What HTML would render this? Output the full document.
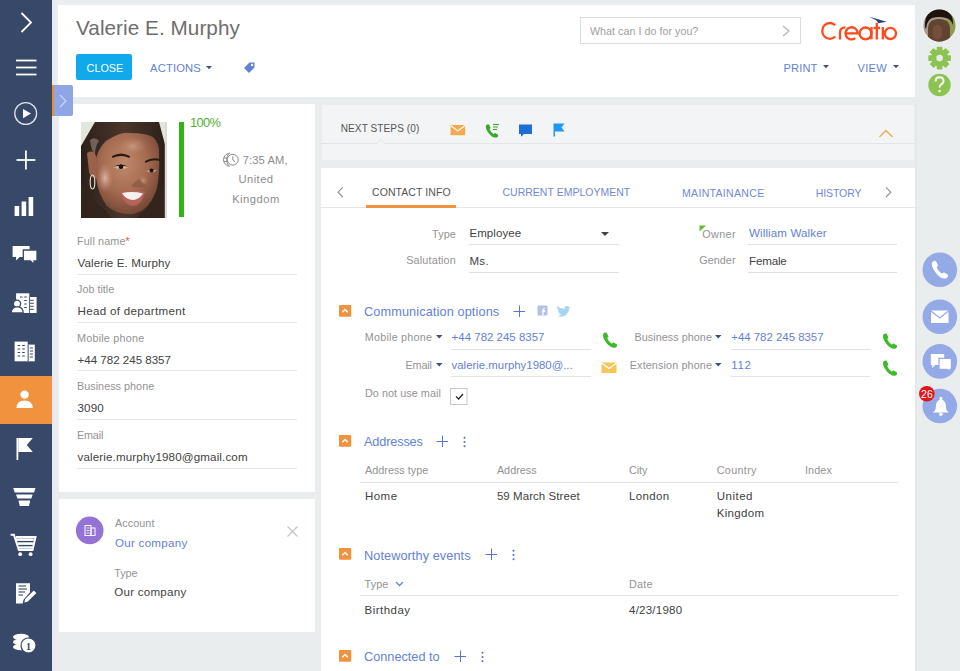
<!DOCTYPE html>
<html><head><meta charset="utf-8"><style>
html,body{margin:0;padding:0;width:960px;height:671px;overflow:hidden;background:#e9eded;font-family:"Liberation Sans", sans-serif;}
.t{position:absolute;white-space:nowrap;line-height:1;font-family:"Liberation Sans", sans-serif;}
svg{overflow:visible}
</style></head><body>
<div style="position:absolute;left:0px;top:0px;width:52px;height:671px;background:#384869;"></div>
<div style="position:absolute;left:52px;top:0px;width:2.5px;height:671px;background:#e6e9f0;"></div>
<div style="position:absolute;left:0px;top:376px;width:52px;height:48px;background:#f1923f;"></div>
<svg style="position:absolute;left:0px;top:0px" width="52" height="671" viewBox="0 0 52 671">
<g fill="none" stroke="#ffffff" stroke-width="1.8">
<polyline points="21.5,13 31,22.5 21.5,32"/>
<line x1="16" y1="60.5" x2="36.5" y2="60.5"/><line x1="16" y1="67.5" x2="36.5" y2="67.5"/><line x1="16" y1="74.5" x2="36.5" y2="74.5"/>
<circle cx="25.7" cy="113.5" r="10.9" stroke-width="1.3" stroke="#dfe2ea"/>
<line x1="16.5" y1="160" x2="35.3" y2="160"/><line x1="25.9" y1="150.6" x2="25.9" y2="169.4"/>
</g>
<g fill="#ffffff">
<polygon points="23,108.9 23,118.2 31,113.55"/>
<rect x="14.6" y="206" width="4.6" height="10"/><rect x="21.6" y="201.5" width="4.6" height="14.5"/><rect x="28.6" y="197" width="4.6" height="19"/>
<!-- chat -->
<path d="M12.6,246 h17 v11 h-10 l-3.5,3.5 v-3.5 h-3.5z"/>
<path d="M23.3,250 h13.7 v11 h-3 v3.5 l-3.5,-3.5 h-7.2z" stroke="#384869" stroke-width="1.3"/>
<!-- person + building -->
<rect x="16.1" y="293.3" width="13.2" height="19.7"/><rect x="29.3" y="297" width="7.3" height="16"/>
<circle cx="17" cy="303.8" r="3.6" stroke="#384869" stroke-width="1.3"/>
<path d="M11.2,313 q0,-6.2 6,-6.2 q6,0 6,6.2z" stroke="#384869" stroke-width="1.3"/>
<!-- buildings -->
<rect x="14.6" y="341.6" width="13.1" height="19.7"/><rect x="27.7" y="344.6" width="7.1" height="16.7"/>
<!-- person -->
<circle cx="24.6" cy="394.6" r="4.2"/>
<path d="M16.5,408 q0,-7.5 8.1,-7.5 q8.1,0 8.1,7.5z"/>
<!-- flag -->
<rect x="16.5" y="438" width="1.8" height="22"/>
<path d="M18.3,438 h14.5 l-6,7 l6,7 h-14.5z"/>
<!-- funnel -->
<path d="M13.2,488 h22.3 l-1.5,4.5 h-19.3z"/><path d="M16,494.5 h16.7 l-1.4,4 h-13.9z"/><path d="M18.5,500.5 h11.7 l-1.2,5.5 h-9.3z"/>
<!-- cart -->
<path d="M10.6,534.8 h3.3 l5,15.2 h13.6 l3,-13 h-19.5" fill="none" stroke="#fff" stroke-width="2"/>
<rect x="16" y="538.3" width="17.8" height="2.6"/><rect x="17.3" y="542.3" width="15.6" height="2.6"/><rect x="18.5" y="546.3" width="13.8" height="2.4"/>
<circle cx="20.2" cy="554.2" r="1.9"/><circle cx="30.6" cy="554.2" r="1.9"/>
<!-- doc -->
<path d="M16,583.3 h14 v9 l-6.5,7.5 l-0.8,3.6 h-6.7z"/>
<path d="M24.3,602.6 l0.9,-3.6 l8.6,-8.6 l2.6,2.6 l-8.6,8.6z"/>
<!-- coins -->
<ellipse cx="21" cy="637" rx="8" ry="3.2"/><ellipse cx="21" cy="642" rx="8" ry="3.2"/><ellipse cx="21" cy="647" rx="8" ry="3.2"/>
<circle cx="28.5" cy="645.5" r="7.5" stroke="#384869" stroke-width="1.2"/>
</g>
<g stroke="#384869" stroke-width="1.1">
<path d="M17.6,345.5 h2.6 M22.2,345.5 h2.6 M17.6,349 h2.6 M22.2,349 h2.6 M17.6,352.5 h2.6 M22.2,352.5 h2.6 M17.6,356 h2.6 M22.2,356 h2.6"/>
<path d="M28.3,344.6 V361.3" stroke-width="0.8"/>
<path d="M29.8,348 h3.2 M29.8,351 h3.2 M29.8,354 h3.2 M29.8,357 h3.2"/>
<path d="M20,297 h2.6 M24.2,297 h2.6 M24.2,300.5 h2.6 M24.2,304 h2.6 M24.2,307.5 h2.6"/>
<path d="M29.8,300.3 h4 M29.8,303.3 h4 M29.8,306.3 h4 M29.8,309.3 h4"/>
<path d="M29.5,297 V313" stroke-width="0.8"/>
<line x1="18.5" y1="586" x2="26" y2="586"/><line x1="18.5" y1="589" x2="27" y2="589"/><line x1="18.5" y1="592" x2="25" y2="592"/><line x1="18.5" y1="595" x2="23" y2="595"/>
</g>
<text x="28.5" y="649.5" font-family="Liberation Serif" font-weight="bold" font-size="10" fill="#384869" text-anchor="middle">1</text>
</svg>
<div style="position:absolute;left:58px;top:5px;width:857px;height:92px;background:#ffffff;"></div>
<div class="t" style="left:76px;top:18.41px;font-size:20.7px;color:#6e6e6e;letter-spacing:0.057px;">Valerie E. Murphy</div>
<div style="position:absolute;left:76px;top:54px;width:56px;height:26px;background:#10a9ec;border-radius:2px"></div>
<div class="t" style="left:86.6px;top:62.82px;font-size:10.8px;color:#ffffff;letter-spacing:-0.002px;">CLOSE</div>
<div class="t" style="left:150px;top:62.68px;font-size:11.2px;color:#6282d6;letter-spacing:0.178px;">ACTIONS</div>
<svg style="position:absolute;left:206px;top:65.6px" width="8" height="5" viewBox="0 0 8 5"><polygon points="0,0 6,0 3,3.2" fill="#3f4f7e"/></svg>
<svg style="position:absolute;left:242px;top:61px" width="14" height="13" viewBox="0 0 14 13"><path d="M2,7 l5.5,-5.5 h5 v5 l-5.5,5.5z" fill="#6282d6"/><circle cx="10" cy="4" r="1.2" fill="#fff"/></svg>
<div class="t" style="left:783.5px;top:62.60px;font-size:11.06px;color:#6282d6;letter-spacing:0.161px;">PRINT</div>
<svg style="position:absolute;left:823.2px;top:65.2px" width="8" height="5" viewBox="0 0 8 5"><polygon points="0,0 6,0 3,3.2" fill="#3f4f7e"/></svg>
<div class="t" style="left:857.5px;top:62.60px;font-size:11.06px;color:#6282d6;letter-spacing:0.289px;">VIEW</div>
<svg style="position:absolute;left:892.6px;top:65.2px" width="8" height="5" viewBox="0 0 8 5"><polygon points="0,0 6,0 3,3.2" fill="#3f4f7e"/></svg>
<div style="position:absolute;left:580px;top:17px;width:221px;height:27px;background:#ffffff;border:1px solid #dadde0;box-sizing:border-box"></div>
<div class="t" style="left:590px;top:26.01px;font-size:10.7px;color:#a0a0a0;letter-spacing:0.037px;">What can I do for you?</div>
<svg style="position:absolute;left:780px;top:24px" width="12" height="14" viewBox="0 0 12 14"><polyline points="3,2 9,7 3,12" fill="none" stroke="#b5b5b5" stroke-width="1.2"/></svg>
<svg style="position:absolute;left:0;top:0" width="960" height="60"><g fill="none" stroke="#fe4a1d" stroke-width="2.3">
<path d="M835.2,25.3 A7.6,7.9 0 1 0 835.2,36.5"/>
<path d="M840,39.4 V32.5 Q840,27.6 845.4,27.4"/>
<path d="M845.5,33.4 H857.7 A6.1,6.1 0 1 0 855.3,38.2"/>
<circle cx="865.5" cy="33.4" r="5.9"/><path d="M871.5,27 V39.4"/>
<path d="M876.8,22.8 V39.4 M873.6,28 H880"/>
<path d="M882.8,27 V39.4"/>
<circle cx="890.4" cy="33.4" r="5.6"/>
</g><path d="M869.5,16.8 L886.5,21.8 L878.5,23.2 L876.5,20.5z" fill="#22407e"/></svg>
<svg style="position:absolute;left:920px;top:5px" width="40" height="100">
<defs><clipPath id="av"><circle cx="19.4" cy="20.5" r="16"/></clipPath></defs>
<circle cx="19.4" cy="20.5" r="16.6" fill="#f4f4f4"/>
<g clip-path="url(#av)">
<rect x="0" y="0" width="40" height="40" fill="#a49a92"/>
<rect x="26" y="8" width="14" height="32" fill="#8d9a55"/>
<path d="M8,40 V24 Q8,14 19,14 Q30,14 30,24 V40z" fill="#62432f"/>
<ellipse cx="17.5" cy="27" rx="5" ry="7.5" fill="#7a5442" opacity="0.7"/>
<path d="M5,22 Q4,5 19,5 Q34,5 33,20 Q31,14 26,13 Q19,11 12,13 Q7,15 6,24z" fill="#1d1410"/>
<rect x="3" y="0" width="32" height="7" fill="#1d1410"/>
<path d="M4,40 Q19,33 34,40z" fill="#2a1d17"/>
</g>
<g transform="translate(19.6,53.1)" fill="#8cc452">
<circle r="8.3"/>
<rect x="-2.9" y="-11.3" width="5.8" height="22.6" rx="0.8"/>
<rect x="-2.9" y="-11.3" width="5.8" height="22.6" rx="0.8" transform="rotate(45)"/>
<rect x="-2.9" y="-11.3" width="5.8" height="22.6" rx="0.8" transform="rotate(90)"/>
<rect x="-2.9" y="-11.3" width="5.8" height="22.6" rx="0.8" transform="rotate(135)"/>
<circle r="3.3" fill="#e8ebee"/>
</g>
<circle cx="19.5" cy="80" r="11.2" fill="#8cc452"/>
<path d="M15.6,76.5 Q15.6,72.3 19.6,72.3 Q23.5,72.3 23.5,76 Q23.5,78.3 21,79.5 Q19.6,80.3 19.6,82.5" fill="none" stroke="#fff" stroke-width="2"/>
<circle cx="19.6" cy="86" r="1.3" fill="#fff"/>
</svg>
<div style="position:absolute;left:59px;top:104px;width:255.5px;height:388px;background:#ffffff;"></div>
<svg style="position:absolute;left:81px;top:122px" width="86" height="96" viewBox="0 0 86 96">
<defs>
<radialGradient id="fg" cx="0.45" cy="0.38" r="0.7">
<stop offset="0" stop-color="#bf886b"/><stop offset="0.5" stop-color="#a66c51"/><stop offset="1" stop-color="#6a3f2f"/>
</radialGradient>
<radialGradient id="ch" cx="0.5" cy="0.5" r="0.5">
<stop offset="0" stop-color="#e0b8a6" stop-opacity="0.95"/><stop offset="1" stop-color="#c08a70" stop-opacity="0"/>
</radialGradient>
<linearGradient id="hl" x1="0" y1="0" x2="1" y2="0">
<stop offset="0" stop-color="#2c201a"/><stop offset="0.5" stop-color="#4a362b"/><stop offset="1" stop-color="#2c201a"/>
</linearGradient>
</defs>
<rect width="86" height="96" fill="#e3e6dd"/>
<path d="M0,24 L14,0 L78,0 L86,30 L86,96 L0,96z" fill="url(#hl)"/>
<path d="M15,36 Q20,20 30,16 Q40,10 50,11 Q64,11 72,15 Q79,22 78,32 Q79,50 76,66 Q72,80 62,88 Q54,93 46,92 Q34,91 26,84 Q17,72 15,56z" fill="url(#fg)"/>
<path d="M6,31 Q12,27 15,34 L16,56 Q10,57 8,50z" fill="#9a6248"/>
<path d="M9,18 Q14,14 18,19 Q14,24 14,33 Q10,28 9,18z" fill="#8c7a70" opacity="0.7"/>
<ellipse cx="24" cy="56" rx="8.5" ry="15" fill="url(#ch)"/>
<ellipse cx="52" cy="24" rx="14" ry="9" fill="url(#ch)" opacity="0.55"/>
<ellipse cx="62" cy="59" rx="5" ry="6" fill="url(#ch)" opacity="0.5"/>
<ellipse cx="11.5" cy="60" rx="2.3" ry="7" fill="none" stroke="#ddd7cd" stroke-width="1.2"/>
<path d="M31,34 Q40,29 49,34 L48.5,36 Q40,32 31.5,36z" fill="#2a1a13"/>
<path d="M64,39 Q71,35 79,37 L79,39 Q71,37 64.5,41z" fill="#2a1a13"/>
<path d="M32,45 Q40,40 48,45 Q40,49 32,45z" fill="#cdb3a6"/>
<path d="M32,45 Q40,40 48,45 Q40,42.5 32,45z" fill="#1c110c"/>
<circle cx="40" cy="44.8" r="2.3" fill="#1c110c"/>
<path d="M65,49 Q70.5,45.5 76,48.5 Q70.5,51.5 65,49z" fill="#c4a99c"/>
<circle cx="70.5" cy="48.6" r="2" fill="#1c110c"/>
<path d="M65,49 Q70.5,45.5 76,48.5 Q70.5,46.5 65,49z" fill="#1c110c"/>
<path d="M50,64 Q54,66.5 57,65 Q60,66.5 65,64 Q62,60 58,57 Q54,60 50,64z" fill="#84503a" opacity="0.55"/>
<path d="M39,70 Q52,67 64,70 Q61,83 52,84 Q43,83 39,70z" fill="#b8625e"/>
<path d="M41,71 Q52,69 62,71.5 Q58,78 52,78 Q45,78 41,71z" fill="#f6f1ec"/>
<path d="M62,90 Q72,82 78,66 L86,62 L86,96 L56,96z" fill="#33251e"/>
<path d="M0,96 L0,60 Q10,78 24,88 L30,96z" fill="#33251e"/>
<rect x="83.8" y="0" width="2.2" height="96" fill="#dadcd2"/>
</svg>
<div style="position:absolute;left:178.5px;top:122px;width:5.5px;height:95px;background:#2fb517;"></div>
<div class="t" style="left:190px;top:117.12px;font-size:12.8px;color:#52b032;letter-spacing:-0.645px;">100%</div>
<svg style="position:absolute;left:222px;top:151px" width="17" height="17" viewBox="0 0 17 17"><g fill="none" stroke="#8a8a8a" stroke-width="1"><path d="M8,2.2 A6.5,6.5 0 1 0 8,15.2"/><path d="M6.5,2.6 Q3,8.7 6.5,14.8"/><path d="M1.8,7 h3.5 M1.8,10.5 h3.5"/><circle cx="10.8" cy="8.7" r="5.4"/><polyline points="10.8,5.4 10.8,8.9 13,10.6"/></g></svg>
<div class="t" style="left:242.7px;top:154.78px;font-size:11.2px;color:#8d8d8d;letter-spacing:0.092px;">7:35 AM,</div>
<div class="t" style="left:56px;width:400px;text-align:center;top:174.48px;font-size:11.2px;color:#8d8d8d;letter-spacing:0.451px;">United</div>
<div class="t" style="left:56px;width:400px;text-align:center;top:194.38px;font-size:11.2px;color:#8d8d8d;letter-spacing:0.507px;">Kingdom</div>
<div class="t" style="left:77px;top:235.52px;font-size:10.8px;color:#939393;letter-spacing:0.132px;">Full name<span style="color:#e0505a">*</span></div>
<div class="t" style="left:77.5px;top:256.84px;font-size:11.6px;color:#424242;letter-spacing:0.094px;">Valerie E. Murphy</div>
<div style="position:absolute;left:77px;top:274.3px;width:220px;height:1.0px;background:#e6e6e6;"></div>
<div class="t" style="left:77px;top:284.22px;font-size:10.8px;color:#939393;letter-spacing:-0.002px;">Job title</div>
<div class="t" style="left:77.5px;top:305.24px;font-size:11.6px;color:#424242;letter-spacing:0.313px;">Head of department</div>
<div style="position:absolute;left:77px;top:322px;width:220px;height:1px;background:#e6e6e6;"></div>
<div class="t" style="left:77px;top:332.52px;font-size:10.8px;color:#939393;letter-spacing:0.214px;">Mobile phone</div>
<div class="t" style="left:77.5px;top:353.54px;font-size:11.6px;color:#424242;letter-spacing:-0.021px;">+44 782 245 8357</div>
<div style="position:absolute;left:77px;top:370.2px;width:220px;height:1.0px;background:#e6e6e6;"></div>
<div class="t" style="left:77px;top:381.22px;font-size:10.8px;color:#939393;letter-spacing:0.027px;">Business phone</div>
<div class="t" style="left:77.5px;top:402.04px;font-size:11.6px;color:#424242;letter-spacing:0.168px;">3090</div>
<div style="position:absolute;left:77px;top:418.7px;width:220px;height:1.0px;background:#e6e6e6;"></div>
<div class="t" style="left:77px;top:429.82px;font-size:10.8px;color:#939393;letter-spacing:-0.175px;">Email</div>
<div class="t" style="left:77.5px;top:450.84px;font-size:11.6px;color:#424242;letter-spacing:0.136px;">valerie.murphy1980@gmail.com</div>
<div style="position:absolute;left:77px;top:467.5px;width:220px;height:1.0px;background:#e6e6e6;"></div>
<div style="position:absolute;left:59px;top:499px;width:255.5px;height:133px;background:#ffffff;"></div>
<svg style="position:absolute;left:75px;top:516px" width="30" height="30" viewBox="0 0 30 30"><circle cx="14.7" cy="14.4" r="13.8" fill="#9572d6"/><g fill="none" stroke="#fff" stroke-width="1"><rect x="10" y="9.5" width="6" height="10"/><rect x="16" y="12" width="4" height="7.5"/></g><g stroke="#fff" stroke-width="0.8"><line x1="11.5" y1="12" x2="14.5" y2="12"/><line x1="11.5" y1="14.5" x2="14.5" y2="14.5"/><line x1="11.5" y1="17" x2="14.5" y2="17"/></g></svg>
<div class="t" style="left:115px;top:517.72px;font-size:10.8px;color:#939393;letter-spacing:0.064px;">Account</div>
<div class="t" style="left:115px;top:537.04px;font-size:11.6px;color:#6282d6;letter-spacing:0.261px;">Our company</div>
<div class="t" style="left:114.3px;top:567.72px;font-size:10.8px;color:#939393;letter-spacing:-0.107px;">Type</div>
<div class="t" style="left:114.3px;top:586.04px;font-size:11.6px;color:#424242;letter-spacing:0.231px;">Our company</div>
<svg style="position:absolute;left:286px;top:525px" width="13" height="13" viewBox="0 0 13 13"><path d="M1.5,1.5 L11.5,11.5 M11.5,1.5 L1.5,11.5" stroke="#c4c4c4" stroke-width="1.2"/></svg>
<div style="position:absolute;left:321px;top:104px;width:594px;height:57.30000000000001px;background:#f3f4f6;box-shadow:inset 0 0 0 1px #e9ebed"></div>
<div style="position:absolute;left:321px;top:143px;width:594px;height:1px;background:#e2e4e7;"></div>
<div class="t" style="left:340.7px;top:124.02px;font-size:10.1px;color:#555555;letter-spacing:0.063px;">NEXT STEPS (0)</div>
<svg style="position:absolute;left:450px;top:123px" width="17" height="14" viewBox="0 0 17 14"><rect x="0.6" y="2" width="14.5" height="10.2" fill="#f5a94c"/><polyline points="0.6,2.5 7.85,8 15.1,2.5" fill="none" stroke="#fff" stroke-width="1.1"/></svg>
<svg style="position:absolute;left:484px;top:122px" width="17" height="16" viewBox="0 0 17 16"><path d="M2,3.5 q1.5,-2 3,-1 l1.5,3 q0,1 -1,1.5 q1,3 4,5 q0.8,-1 1.6,-1 l3,1.8 q0.6,1.6 -1.2,2.6 q-4,1 -8,-4 q-4,-5 -2.9,-7.9z" fill="#3ba82b"/><g stroke="#3ba82b" stroke-width="1"><line x1="9" y1="2.5" x2="15" y2="2.5"/><line x1="9" y1="5" x2="14" y2="5"/><line x1="9" y1="7.5" x2="13" y2="7.5"/></g></svg>
<svg style="position:absolute;left:518px;top:123px" width="15" height="14" viewBox="0 0 15 14"><path d="M1,1.5 h13 v9.5 h-8 l-3,2.8 v-2.8 h-2z" fill="#1d6fd8"/></svg>
<svg style="position:absolute;left:552px;top:122px" width="14" height="16" viewBox="0 0 14 16"><rect x="1.5" y="1.5" width="1.5" height="13" fill="#2196f3"/><path d="M3,1.5 h9.5 l-3,4 l3,4 h-9.5z" fill="#2196f3"/></svg>
<svg style="position:absolute;left:876.5px;top:128px" width="18" height="11" viewBox="0 0 18 11"><polyline points="2.5,9 8.9,2.5 15.5,9" fill="none" stroke="#f5a94c" stroke-width="1.3"/></svg>
<svg style="position:absolute;left:375.5px;top:138.5px" width="14" height="7" viewBox="0 0 14 7"><path d="M0,5 L5,0.5 L10,5" fill="#f3f4f6" stroke="#e2e4e7" stroke-width="1"/></svg>
<div style="position:absolute;left:321px;top:167.5px;width:594px;height:503.5px;background:#ffffff;"></div>
<div style="position:absolute;left:321px;top:207px;width:594px;height:1px;background:#e5e7ea;"></div>
<svg style="position:absolute;left:334px;top:184px" width="12" height="16" viewBox="0 0 12 16"><polyline points="8.8,3.4 4,8.2 8.8,13" fill="none" stroke="#8f8f8f" stroke-width="1.1"/></svg>
<div class="t" style="left:372px;top:186.88px;font-size:10.5px;color:#555555;letter-spacing:0.074px;">CONTACT INFO</div>
<div style="position:absolute;left:366px;top:205px;width:89.5px;height:2.5px;background:#f1923f;"></div>
<div class="t" style="left:502.5px;top:187.62px;font-size:10.45px;color:#7089d6;letter-spacing:0.052px;">CURRENT EMPLOYMENT</div>
<div class="t" style="left:682px;top:187.57px;font-size:10.5px;color:#7089d6;letter-spacing:0.331px;">MAINTAINANCE</div>
<div class="t" style="left:815.7px;top:187.57px;font-size:10.5px;color:#7089d6;letter-spacing:-0.083px;">HISTORY</div>
<svg style="position:absolute;left:882px;top:184px" width="12" height="16" viewBox="0 0 12 16"><polyline points="4,3.4 8.8,8.2 4,13" fill="none" stroke="#8f8f8f" stroke-width="1.1"/></svg>
<div class="t" style="right:504.2px;top:229.02px;font-size:10.8px;color:#939393;letter-spacing:0.126px;margin-right:-0.126px;">Type</div>
<div class="t" style="left:469.4px;top:228.22px;font-size:11.5px;color:#424242;letter-spacing:0.094px;">Employee</div>
<svg style="position:absolute;left:600.7px;top:232px" width="9" height="6" viewBox="0 0 9 6"><polygon points="0,0 8,0 4.0,4" fill="#444"/></svg>
<div style="position:absolute;left:469px;top:244px;width:150px;height:1px;background:#e0e0e0;"></div>
<div class="t" style="right:504.2px;top:255.32px;font-size:10.8px;color:#939393;letter-spacing:0.174px;margin-right:-0.174px;">Salutation</div>
<div class="t" style="left:469.4px;top:255.82px;font-size:11.5px;color:#424242;letter-spacing:0.334px;">Ms.</div>
<div style="position:absolute;left:469px;top:272px;width:150px;height:1px;background:#e0e0e0;"></div>
<svg style="position:absolute;left:698.5px;top:225px" width="8" height="7" viewBox="0 0 8 7"><polygon points="0.5,0.5 7,0.5 0.5,6.5" fill="#5ec12c"/></svg>
<div class="t" style="right:224.5px;top:228.82px;font-size:10.8px;color:#939393;letter-spacing:0.372px;margin-right:-0.372px;">Owner</div>
<div class="t" style="left:749px;top:227.14px;font-size:11.6px;color:#6282d6;letter-spacing:0.102px;">William Walker</div>
<div style="position:absolute;left:748px;top:244px;width:149px;height:1px;background:#e0e0e0;"></div>
<div class="t" style="right:224.5px;top:254.82px;font-size:10.8px;color:#939393;letter-spacing:0.057px;margin-right:-0.057px;">Gender</div>
<div class="t" style="left:749px;top:254.94px;font-size:11.6px;color:#424242;letter-spacing:-0.174px;">Female</div>
<div style="position:absolute;left:748px;top:272px;width:149px;height:1px;background:#e0e0e0;"></div>
<svg style="position:absolute;left:338.6px;top:304.7px" width="13" height="12" viewBox="0 0 13 12"><rect x="0" y="0" width="12.2" height="11.8" rx="1" fill="#f1923f"/><polyline points="3.4,7.2 6.1,4.5 8.8,7.2" fill="none" stroke="#fff" stroke-width="1.5"/></svg>
<div class="t" style="left:364px;top:306.20px;font-size:12.7px;color:#6282d6;letter-spacing:0.130px;">Communication options</div>
<svg style="position:absolute;left:513px;top:305px" width="13" height="13" viewBox="0 0 13 13"><path d="M6.5,0.5 V12 M0.5,6.5 H12" stroke="#5674d0" stroke-width="1"/></svg>

<svg style="position:absolute;left:536.5px;top:305px" width="11" height="11" viewBox="0 0 11 11"><rect x="0.5" y="0.5" width="10" height="10" rx="1" fill="#b4c0e4"/><path d="M6,10.5 V5.5 H8 M5,6.5 H8 M6,5.5 q0,-2 2,-2" stroke="#fff" stroke-width="1.2" fill="none"/></svg>
<svg style="position:absolute;left:556px;top:305.5px" width="15" height="13" viewBox="0 0 15 13"><path d="M1,9.5 q5,3 9.5,-1 q3,-3 2.8,-6.5 l1.5,-1.2 l-1.8,0.3 q-1,-1.5 -3,-1 q-2,0.8 -1.5,3 q-4,0 -7,-3 q-1,3 1.5,4.5 l-1.3,-0.2 q0.3,2 2.3,2.7 h-1.3 q0.8,1.4 2.6,1.6 q-2,1.4 -4.3,0.8z" fill="#a8d5f2"/></svg>
<div class="t" style="right:528.1px;top:332.42px;font-size:10.8px;color:#939393;letter-spacing:0.205px;margin-right:-0.205px;">Mobile phone</div>
<svg style="position:absolute;left:436px;top:335.2px" width="9" height="6" viewBox="0 0 9 6"><polygon points="0,0 6.5,0 3.25,3.6" fill="#3f4d70"/></svg>
<div class="t" style="left:451.6px;top:332.31px;font-size:11.4px;color:#6282d6;letter-spacing:0.042px;">+44 782 245 8357</div>
<div style="position:absolute;left:451px;top:349px;width:140px;height:1px;background:#e3e3e3;"></div>
<svg style="position:absolute;left:601px;top:331px" width="16" height="16" viewBox="0 0 16 16"><path d="M2.2,2.8 q1.8,-2.2 3.4,-1 l1.8,3.5 q0,1.2 -1.2,1.8 q1.2,3.5 4.6,5.6 q1,-1.2 1.9,-1.1 l3.3,2 q0.8,1.8 -1.3,3 q-4.6,1.2 -9.2,-4.6 q-4.5,-5.7 -3.3,-9.2z" fill="#3dbb2a"/></svg>
<div class="t" style="right:248.10000000000002px;top:332.42px;font-size:10.8px;color:#939393;letter-spacing:0.043px;margin-right:-0.043px;">Business phone</div>
<svg style="position:absolute;left:715.2px;top:335.2px" width="9" height="6" viewBox="0 0 9 6"><polygon points="0,0 6.5,0 3.25,3.6" fill="#3f4d70"/></svg>
<div class="t" style="left:731.25px;top:332.31px;font-size:11.4px;color:#6282d6;letter-spacing:0.009px;">+44 782 245 8357</div>
<div style="position:absolute;left:731px;top:349px;width:139px;height:1px;background:#e3e3e3;"></div>
<svg style="position:absolute;left:881px;top:331.5px" width="16" height="16" viewBox="0 0 16 16"><path d="M2.2,2.8 q1.8,-2.2 3.4,-1 l1.8,3.5 q0,1.2 -1.2,1.8 q1.2,3.5 4.6,5.6 q1,-1.2 1.9,-1.1 l3.3,2 q0.8,1.8 -1.3,3 q-4.6,1.2 -9.2,-4.6 q-4.5,-5.7 -3.3,-9.2z" fill="#3dbb2a"/></svg>
<div class="t" style="right:528.1px;top:360.42px;font-size:10.8px;color:#939393;letter-spacing:-0.150px;margin-right:0.150px;">Email</div>
<svg style="position:absolute;left:436px;top:363.2px" width="9" height="6" viewBox="0 0 9 6"><polygon points="0,0 6.5,0 3.25,3.6" fill="#3f4d70"/></svg>
<div class="t" style="left:451.6px;top:360.31px;font-size:11.4px;color:#6282d6;letter-spacing:-0.000px;">valerie.murphy1980@...</div>
<div style="position:absolute;left:451px;top:376px;width:140px;height:1px;background:#e3e3e3;"></div>
<svg style="position:absolute;left:601px;top:361px" width="16" height="13" viewBox="0 0 16 13"><rect x="0.5" y="1.5" width="15" height="10.5" fill="#f7c65a"/><polyline points="0.5,2 8,7.5 15.5,2" fill="none" stroke="#fff" stroke-width="1.1"/></svg>
<div class="t" style="right:248.10000000000002px;top:360.42px;font-size:10.8px;color:#939393;letter-spacing:0.118px;margin-right:-0.118px;">Extension phone</div>
<svg style="position:absolute;left:715.2px;top:363.2px" width="9" height="6" viewBox="0 0 9 6"><polygon points="0,0 6.5,0 3.25,3.6" fill="#3f4d70"/></svg>
<div class="t" style="left:731.25px;top:360.31px;font-size:11.4px;color:#6282d6;letter-spacing:0.689px;">112</div>
<div style="position:absolute;left:731px;top:376px;width:139px;height:1px;background:#e3e3e3;"></div>
<svg style="position:absolute;left:881px;top:359px" width="16" height="16" viewBox="0 0 16 16"><path d="M2.2,2.8 q1.8,-2.2 3.4,-1 l1.8,3.5 q0,1.2 -1.2,1.8 q1.2,3.5 4.6,5.6 q1,-1.2 1.9,-1.1 l3.3,2 q0.8,1.8 -1.3,3 q-4.6,1.2 -9.2,-4.6 q-4.5,-5.7 -3.3,-9.2z" fill="#3dbb2a"/></svg>
<div class="t" style="left:365px;top:388.02px;font-size:10.8px;color:#939393;letter-spacing:0.056px;">Do not use mail</div>
<svg style="position:absolute;left:450px;top:388px" width="18" height="18" viewBox="0 0 18 18"><rect x="0.5" y="0.5" width="16.5" height="16" fill="#fff" stroke="#c8c8c8"/><polyline points="6,8.3 8.6,11 13,6" fill="none" stroke="#222" stroke-width="1.2"/></svg>
<svg style="position:absolute;left:338.6px;top:434.7px" width="13" height="12" viewBox="0 0 13 12"><rect x="0" y="0" width="12.2" height="11.8" rx="1" fill="#f1923f"/><polyline points="3.4,7.2 6.1,4.5 8.8,7.2" fill="none" stroke="#fff" stroke-width="1.5"/></svg>
<div class="t" style="left:364px;top:436.20px;font-size:12.7px;color:#6282d6;letter-spacing:-0.132px;">Addresses</div>
<svg style="position:absolute;left:436px;top:435px" width="13" height="13" viewBox="0 0 13 13"><path d="M6.5,0.5 V12 M0.5,6.5 H12" stroke="#5674d0" stroke-width="1"/></svg>

<svg style="position:absolute;left:462px;top:435.5px" width="4" height="12" viewBox="0 0 4 12"><circle cx="2.5" cy="1.8" r="1" fill="#4d6bd0"/><circle cx="2.5" cy="6" r="1" fill="#4d6bd0"/><circle cx="2.5" cy="10.2" r="1" fill="#4d6bd0"/></svg>
<div class="t" style="left:365px;top:464.52px;font-size:10.8px;color:#939393;letter-spacing:0.026px;">Address type</div>
<div class="t" style="left:496.9px;top:464.52px;font-size:10.8px;color:#939393;letter-spacing:0.032px;">Address</div>
<div class="t" style="left:629px;top:464.52px;font-size:10.8px;color:#939393;letter-spacing:-0.036px;">City</div>
<div class="t" style="left:716.7px;top:464.52px;font-size:10.8px;color:#939393;letter-spacing:0.331px;">Country</div>
<div class="t" style="left:805px;top:464.52px;font-size:10.8px;color:#939393;letter-spacing:0.095px;">Index</div>
<div style="position:absolute;left:360px;top:482px;width:538px;height:1px;background:#e3e3e3;"></div>
<div class="t" style="left:365px;top:490.93px;font-size:11.5px;color:#424242;letter-spacing:0.454px;">Home</div>
<div class="t" style="left:496.9px;top:490.93px;font-size:11.5px;color:#424242;letter-spacing:0.062px;">59 March Street</div>
<div class="t" style="left:629px;top:490.93px;font-size:11.5px;color:#424242;letter-spacing:0.345px;">London</div>
<div class="t" style="left:716.7px;top:490.93px;font-size:11.5px;color:#424242;letter-spacing:0.510px;">United</div>
<div class="t" style="left:716.7px;top:507.92px;font-size:11.5px;color:#424242;letter-spacing:0.335px;">Kingdom</div>
<svg style="position:absolute;left:338.6px;top:548.2px" width="13" height="12" viewBox="0 0 13 12"><rect x="0" y="0" width="12.2" height="11.8" rx="1" fill="#f1923f"/><polyline points="3.4,7.2 6.1,4.5 8.8,7.2" fill="none" stroke="#fff" stroke-width="1.5"/></svg>
<div class="t" style="left:364px;top:549.71px;font-size:12.7px;color:#6282d6;letter-spacing:0.089px;">Noteworthy events</div>
<svg style="position:absolute;left:485px;top:548px" width="13" height="13" viewBox="0 0 13 13"><path d="M6.5,0.5 V12 M0.5,6.5 H12" stroke="#5674d0" stroke-width="1"/></svg>

<svg style="position:absolute;left:511px;top:549px" width="4" height="12" viewBox="0 0 4 12"><circle cx="2.5" cy="1.8" r="1" fill="#4d6bd0"/><circle cx="2.5" cy="6" r="1" fill="#4d6bd0"/><circle cx="2.5" cy="10.2" r="1" fill="#4d6bd0"/></svg>
<div class="t" style="left:364.6px;top:579.22px;font-size:10.8px;color:#939393;letter-spacing:0.093px;">Type</div>
<svg style="position:absolute;left:394px;top:580px" width="11" height="8" viewBox="0 0 11 8"><polyline points="2,2 5.5,5.5 9,2" fill="none" stroke="#6282d6" stroke-width="1.3"/></svg>
<div class="t" style="left:629px;top:579.22px;font-size:10.8px;color:#939393;letter-spacing:0.196px;">Date</div>
<div style="position:absolute;left:360px;top:595px;width:538px;height:1px;background:#e3e3e3;"></div>
<div class="t" style="left:364.6px;top:605.23px;font-size:11.5px;color:#424242;letter-spacing:0.473px;">Birthday</div>
<div class="t" style="left:629px;top:605.23px;font-size:11.5px;color:#424242;letter-spacing:0.241px;">4/23/1980</div>
<svg style="position:absolute;left:338.6px;top:649.7px" width="13" height="12" viewBox="0 0 13 12"><rect x="0" y="0" width="12.2" height="11.8" rx="1" fill="#f1923f"/><polyline points="3.4,7.2 6.1,4.5 8.8,7.2" fill="none" stroke="#fff" stroke-width="1.5"/></svg>
<div class="t" style="left:364px;top:651.21px;font-size:12.7px;color:#6282d6;letter-spacing:0.011px;">Connected to</div>
<svg style="position:absolute;left:454px;top:650px" width="13" height="13" viewBox="0 0 13 13"><path d="M6.5,0.5 V12 M0.5,6.5 H12" stroke="#5674d0" stroke-width="1"/></svg>

<svg style="position:absolute;left:480px;top:650.5px" width="4" height="12" viewBox="0 0 4 12"><circle cx="2.5" cy="1.8" r="1" fill="#4d6bd0"/><circle cx="2.5" cy="6" r="1" fill="#4d6bd0"/><circle cx="2.5" cy="10.2" r="1" fill="#4d6bd0"/></svg>
<div style="position:absolute;left:915px;top:104px;width:2px;height:567px;background:#e5e8ea;"></div>
<svg style="position:absolute;left:920px;top:250px" width="40" height="180" viewBox="0 0 40 180">
<circle cx="19.8" cy="19.8" r="17.3" fill="#93aae6"/>
<circle cx="19.8" cy="66.8" r="17.3" fill="#93aae6"/>
<circle cx="19.8" cy="111.4" r="17.3" fill="#93aae6"/>
<circle cx="19.8" cy="156" r="17.3" fill="#93aae6"/>
<path d="M12,12.5 q2,-2.5 4,-1.2 l2,4 q0,1.4 -1.4,2 q1.4,4 5.4,6.5 q1.1,-1.4 2.2,-1.3 l3.8,2.3 q0.9,2 -1.5,3.4 q-5.3,1.4 -10.6,-5.3 q-5.2,-6.6 -3.9,-10.4z" fill="#fff"/>
<rect x="11" y="60.5" width="17.5" height="12.5" fill="#fff"/><polyline points="11,61 19.75,68 28.5,61" fill="none" stroke="#93aae6" stroke-width="1.3"/>
<path d="M10.8,104 h13.4 v11 h-9 l-3,3 v-3 h-1.4z" fill="#fff"/>
<path d="M19,108.3 h12.4 v11 h-1.5 v2.6 l-2.6,-2.6 h-8.3z" fill="#fff" stroke="#93aae6" stroke-width="1.2"/>
<path d="M12.8,162.5 q3,-1.5 3,-5.5 q0,-7 5.1,-7.6 q5.1,0.6 5.1,7.6 q0,4 3,5.5z" fill="#fff"/>
<rect x="19.4" y="147" width="3" height="3" rx="1" fill="#fff"/>
<circle cx="20.9" cy="164.2" r="1.8" fill="#fff"/>
<circle cx="6.8" cy="143.8" r="7.8" fill="#e5141b"/>
<text x="6.9" y="148" font-family="Liberation Sans" font-size="10.5" fill="#fff" text-anchor="middle">26</text>
</svg>
<div style="position:absolute;left:52px;top:85px;width:21px;height:31px;background:#8ea6e6;border-left:2px solid #f28c28;box-sizing:border-box;border-radius:0 2px 2px 0"></div>
<svg style="position:absolute;left:56px;top:92px" width="14" height="18" viewBox="0 0 14 18"><polyline points="4,3 10,9 4,15" fill="none" stroke="#c9d6f6" stroke-width="1.2"/></svg>
</body></html>
